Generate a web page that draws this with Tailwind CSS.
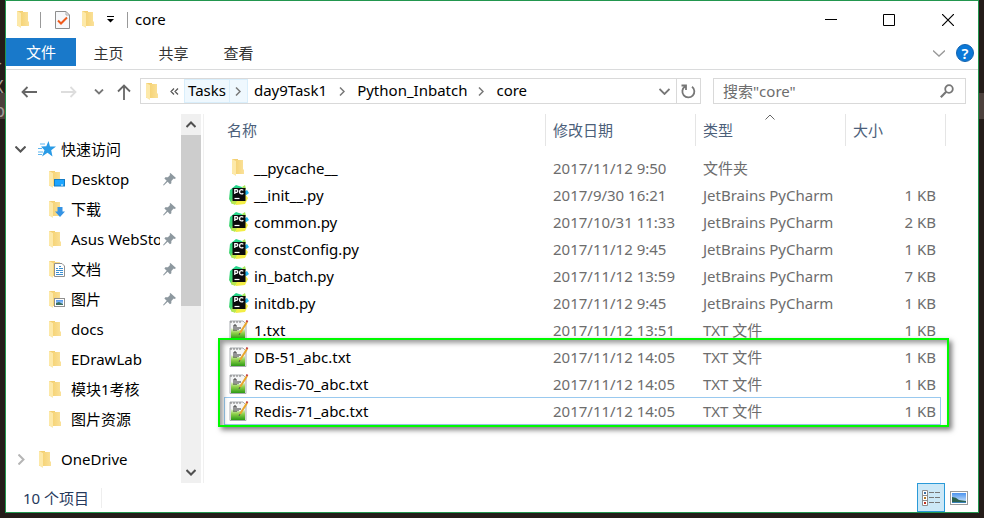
<!DOCTYPE html>
<html lang="zh-CN">
<head>
<meta charset="utf-8">
<title>core</title>
<script src="https://cdn.jsdelivr.net/npm/@tailwindcss/browser@4"></script>
</head>
<body class="min-h-screen bg-[#241c19] font-['Noto_Sans','Noto_Sans_CJK_SC',sans-serif] text-[15px] leading-5 text-black">

<svg class="absolute size-0" aria-hidden="true">
  <defs>
    <linearGradient id="fold" x1="0" x2="1"><stop offset="0" stop-color="#f6d478"/><stop offset="1" stop-color="#fae19a"/></linearGradient>
    <linearGradient id="grass" x1="0" x2="0" y1="0" y2="1"><stop offset="0" stop-color="#e9f6d6"/><stop offset="0.45" stop-color="#8fd04a"/><stop offset="1" stop-color="#2c9a16"/></linearGradient>
    <linearGradient id="jbl" x1="0" x2="0" y1="0" y2="1"><stop offset="0" stop-color="#1fd68d"/><stop offset="1" stop-color="#4fd463"/></linearGradient>
    <linearGradient id="sky" x1="0" x2="0" y1="0" y2="1"><stop offset="0" stop-color="#4c93ee"/><stop offset="1" stop-color="#d9ecfb"/></linearGradient>
    <symbol id="folder" viewBox="0 0 12 17">
      <path d="M0 0H6V15H0Z" fill="#f3cf72"/>
      <path d="M4 1H11V10L12 11V15H4Z" fill="url(#fold)"/>
      <path d="M0 0L4 2V17L0 14.500Z" fill="#fde9a9"/>
    </symbol>
    <symbol id="pycharm" viewBox="0 0 20 20">
      <path d="M1 5L7 0L13 2L11 14L3 19L0 14Z" fill="url(#jbl)"/>
      <path d="M13 2L16 0L17 4L14 6Z" fill="#a6e95a"/>
      <path d="M15 7L18 5L20 8L16 11Z" fill="#1fb5ea"/>
      <path d="M16 9L19 13L16 19L7 20L4 16Z" fill="#f3ee45"/>
      <path d="M3 14L8 16L6 20L2 18Z" fill="#b7e750"/>
      <rect x="3.500" y="3" width="13" height="13" fill="#0b0b0c"/>
      <path d="M5.800 9V4.700H7.400Q8.800 4.700 8.800 6T7.400 7.300H5.800M14.300 5.400Q13.600 4.700 12.600 4.700Q10.600 4.700 10.600 6.800T12.600 8.900Q13.600 8.900 14.300 8.200" fill="none" stroke="#fff" stroke-width="1.300"/>
      <path d="M5.500 13.500H10.500" stroke="#fff" stroke-width="1.200"/>
    </symbol>
    <symbol id="notepad" viewBox="0 0 20 20">
      <path d="M1 1H14L17 4V19.500H1Z" fill="#f4f5f6" stroke="#a9adb1"/>
      <path d="M2 3V1M5 3V1M8 3V1M11 3V1" stroke="#777"/>
      <path d="M2 8Q9 12 16 9V19H2Z" fill="url(#grass)"/>
      <path d="M5 5V11M7 5V11M5 5H7M9 7V10M11 7V9" fill="none" stroke="#333"/>
      <path d="M18 2L11 13" stroke="#e9a52c" stroke-width="2"/>
      <path d="M17.500 2L18.500 0.500" stroke="#c23d3d" stroke-width="2"/>
      <path d="M11 13L10 15" stroke="#555"/>
    </symbol>
    <symbol id="pin" viewBox="0 0 14 14">
      <path d="M8 0L14 5.500L12.500 6.500L11.500 6L9 8.500L9 11L7.500 12L5 9.300L0.800 13.500L0 13L4 8.300L1.500 6L2.500 4.500L5.300 4.600L7.800 2L7 1Z" fill="#8d989f"/>
    </symbol>
    <symbol id="crumb" viewBox="0 0 6 9"><path d="M1 0.500L5 4.500L1 8.500" fill="none" stroke="#777" stroke-width="1.500"/></symbol>
  </defs>
</svg>

<div class="relative flex min-h-screen px-[5px] pb-[5px]">
  <!-- editor peeking out behind the window -->
  <div class="absolute inset-x-0 top-[93px] h-[26px] bg-[#4c403c]"></div>
  <div class="absolute left-0 top-[50px] w-[5px] overflow-hidden text-[18px] leading-6 text-[#a39c98]" aria-hidden="true">
    <div class="-ml-1">-</div><div class="-ml-[7px]">X</div><div class="-ml-[6px]">p</div>
  </div>

  <div class="relative flex min-w-0 flex-1 flex-col border border-[#22964e] bg-white">
    <!-- title bar -->
    <header class="flex h-[37px] items-center pl-[11px]">
      <svg class="h-[17px] w-3"><use href="#folder"/></svg>
      <span class="ml-[11px] h-4 w-px bg-[#999]"></span>
      <button class="ml-[14px]" aria-label="属性">
        <svg class="h-[18px] w-[15px]" viewBox="0 0 15 18"><path d="M0.500 0.500H11L14.500 4V17.500H0.500Z" fill="#f7f8fa" stroke="#8d8d8d"/><path d="M11 0.500V4H14.500" fill="none" stroke="#aaa"/><path d="M3 9.500L6 12.500L12 6.500" fill="none" stroke="#ee5a1c" stroke-width="2"/></svg>
      </button>
      <button class="ml-3" aria-label="新建文件夹"><svg class="h-[17px] w-3"><use href="#folder"/></svg></button>
      <button class="ml-[13px]" aria-label="自定义快速访问工具栏"><svg class="h-[7px] w-[7px]" viewBox="0 0 7 7"><path d="M0 0.500H7" stroke="#000"/><path d="M0 3H7L3.500 6.500Z"/></svg></button>
      <span class="ml-[13px] h-4 w-px bg-[#999]"></span>
      <h1 class="ml-[7px] pb-[2px]">core</h1>
      <div class="ml-auto flex self-stretch">
        <button class="flex w-[58px] items-center justify-center" aria-label="最小化"><svg class="h-3 w-3" viewBox="0 0 12 12"><path d="M0 5.500H12" stroke="#000"/></svg></button>
        <button class="flex w-[58px] items-center justify-center" aria-label="最大化"><svg class="h-3 w-3" viewBox="0 0 12 12"><path d="M0.500 0.500H11.500V11.500H0.500Z" fill="none" stroke="#000"/></svg></button>
        <button class="flex w-[60px] items-center justify-center" aria-label="关闭"><svg class="h-3 w-3" viewBox="0 0 12 12"><path d="M0 0L12 12M12 0L0 12" stroke="#000" stroke-width="1.200"/></svg></button>
      </div>
    </header>

    <!-- ribbon tabs -->
    <nav class="flex h-8 items-start border-b border-[#dadbdc] text-[#333]">
      <button class="h-7 w-[70px] bg-[#1979ca] text-white">文件</button>
      <button class="h-[30px] w-[65px]">主页</button>
      <button class="h-[30px] w-[65px]">共享</button>
      <button class="h-[30px] w-[65px]">查看</button>
      <div class="ml-auto flex h-[30px] items-center gap-[11px] pr-1">
        <button aria-label="展开功能区"><svg class="h-[7px] w-3" viewBox="0 0 12 7"><path d="M0 0.500L6 6L12 0.500" fill="none" stroke="#999" stroke-width="1.300"/></svg></button>
        <button class="size-[18px] rounded-full border border-[#1263b0] bg-[#0b78d7] text-center text-[15px] font-semibold leading-4 text-white" aria-label="帮助">?</button>
      </div>
    </nav>

    <!-- address row -->
    <div class="flex h-11 items-start pt-2">
      <div class="flex h-[26px] w-[134px] shrink-0 items-center pl-[15px] pt-[2px]">
        <button aria-label="后退"><svg class="h-3 w-4" viewBox="0 0 16 12"><path d="M16 6H1.500M6.500 1L1.500 6L6.500 11" fill="none" stroke="#666" stroke-width="1.800"/></svg></button>
        <button class="ml-6" aria-label="前进"><svg class="h-3 w-4" viewBox="0 0 16 12"><path d="M0 6H14.500M9.500 1L14.500 6L9.500 11" fill="none" stroke="#ddd" stroke-width="1.800"/></svg></button>
        <button class="ml-[17px]" aria-label="最近位置"><svg class="h-[6px] w-[10px]" viewBox="0 0 10 6"><path d="M1 0.500L5 4.500L9 0.500" fill="none" stroke="#777" stroke-width="1.800"/></svg></button>
        <button class="ml-[13px]" aria-label="上移"><svg class="h-4 w-[14px]" viewBox="0 0 14 16"><path d="M7 16V1.500M1 7.500L7 1.500L13 7.500" fill="none" stroke="#666" stroke-width="1.800"/></svg></button>
      </div>
      <div class="flex h-[26px] min-w-0 flex-1 items-center border border-[#d9d9d9] pl-[5px]">
        <svg class="h-[17px] w-3"><use href="#folder"/></svg>
        <svg class="ml-3 h-[7px] w-[9px]" viewBox="0 0 9 7"><path d="M4 0.500L1 3.500L4 6.500M8 0.500L5 3.500L8 6.500" fill="none" stroke="#555" stroke-width="1.200"/></svg>
        <a href="#" class="ml-[5px] flex h-full items-center border border-[#d9eefb] bg-[#eff8fe] px-[3px] pb-[2px]">Tasks</a>
        <span class="flex h-full w-[18px] items-center justify-center border-y border-r border-[#d9eefb] bg-[#eff8fe]"><svg class="h-[9px] w-[6px]"><use href="#crumb"/></svg></span>
        <a href="#" class="ml-[6px] pb-[2px]">day9Task1</a>
        <svg class="mx-3 h-[9px] w-[6px]"><use href="#crumb"/></svg>
        <a href="#" class="pb-[2px]">Python_Inbatch</a>
        <svg class="ml-[11px] mr-3 h-[9px] w-[6px]"><use href="#crumb"/></svg>
        <a href="#" class="pb-[2px]">core</a>
        <button class="ml-auto mr-[6px]" aria-label="以前的位置"><svg class="h-[7px] w-[11px]" viewBox="0 0 11 7"><path d="M0.500 1L5.500 6L10.500 1" fill="none" stroke="#777" stroke-width="1.800"/></svg></button>
        <button class="flex h-full w-6 items-center justify-center border-l border-[#d9d9d9]" aria-label="刷新"><svg class="h-[15px] w-[15px]" viewBox="0 0 15 15"><path d="M4 2.500A6 6 0 1 0 11 2.700M0.500 1.500H5V6" fill="none" stroke="#777" stroke-width="1.800"/></svg></button>
      </div>
      <label class="ml-3 mr-3 flex h-[26px] w-[253px] shrink-0 items-center border border-[#d9d9d9] px-[9px] pr-[11px]">
        <input type="search" placeholder="搜索&quot;core&quot;" aria-label="搜索" class="min-w-0 flex-1 outline-none placeholder:text-[#6d6d6d]">
        <svg class="h-[14px] w-[14px]" viewBox="0 0 14 14"><circle cx="9" cy="5" r="3.800" fill="none" stroke="#777" stroke-width="1.800"/><path d="M6.200 7.800L0.800 13.200" stroke="#777" stroke-width="2.200"/></svg>
      </label>
    </div>

    <div class="flex min-h-0 flex-1">
      <!-- navigation pane -->
      <aside class="w-[175px] shrink-0 overflow-hidden pt-5">
        <ul>
          <li class="flex h-[30px] items-center pl-[9px]">
            <svg class="h-[7px] w-[11px]" viewBox="0 0 11 7"><path d="M0.500 0.500L5.500 5.500L10.500 0.500" fill="none" stroke="#555" stroke-width="2"/></svg>
            <svg class="ml-3 h-4 w-[18px]" viewBox="0 0 18 16"><path d="M10.500 0L12 5.500L18 5.500L13.200 9.300L14.500 15.500L9.500 11.800L4 15.500L6.500 9.300L3 5.500L8.300 5.300Z" fill="#2a9be6"/><path d="M2 3H7M0 7.500H4M0 11H5M0 13.500H4" stroke="#5cb5ee"/></svg>
            <span class="ml-[5px]">快速访问</span>
          </li>
          <li class="flex h-[30px] items-center pl-[43px] pr-[5px]">
            <svg class="h-[17px] w-4 shrink-0" viewBox="0 0 16 17"><use href="#folder" width="12" height="17"/><rect x="5.500" y="8.500" width="10" height="6.500" fill="#1da5ff" stroke="#147cc4"/><path d="M12 14H14" stroke="#fff"/></svg>
            <span class="ml-[6px] min-w-0 flex-1 overflow-hidden whitespace-nowrap">Desktop</span><svg class="ml-[3px] size-[13px] shrink-0"><use href="#pin"/></svg>
          </li>
          <li class="flex h-[30px] items-center pl-[43px] pr-[5px]">
            <svg class="h-[17px] w-4 shrink-0" viewBox="0 0 16 17"><use href="#folder" width="12" height="17"/><path d="M8.500 6H13.500V10.500H16L11 16L6 10.500H8.500Z" fill="#3593e4"/></svg>
            <span class="ml-[6px] min-w-0 flex-1 overflow-hidden whitespace-nowrap">下载</span><svg class="ml-[3px] size-[13px] shrink-0"><use href="#pin"/></svg>
          </li>
          <li class="flex h-[30px] items-center pl-[43px] pr-[5px]">
            <svg class="mr-1 h-[17px] w-3 shrink-0"><use href="#folder"/></svg>
            <span class="ml-[6px] min-w-0 flex-1 overflow-hidden whitespace-nowrap">Asus WebStorage</span><svg class="ml-[3px] size-[13px] shrink-0"><use href="#pin"/></svg>
          </li>
          <li class="flex h-[30px] items-center pl-[43px] pr-[5px]">
            <svg class="h-[17px] w-4 shrink-0" viewBox="0 0 16 17"><use href="#folder" width="12" height="17"/><path d="M5.500 2.500H13L15.500 5V15.500H5.500Z" fill="#fff" stroke="#909090"/><path d="M7 7.500H9M10 5.500H12M10 7.500H14M7 9.500H14M7 11.500H10M11 11.500H14M7 13.500H14" stroke="#3d8fd0"/></svg>
            <span class="ml-[6px] min-w-0 flex-1 overflow-hidden whitespace-nowrap">文档</span><svg class="ml-[3px] size-[13px] shrink-0"><use href="#pin"/></svg>
          </li>
          <li class="flex h-[30px] items-center pl-[43px] pr-[5px]">
            <svg class="h-[17px] w-4 shrink-0" viewBox="0 0 16 17"><use href="#folder" width="12" height="17"/><rect x="5.500" y="7.500" width="10" height="8" fill="#fff" stroke="#909090"/><rect x="7" y="9" width="7" height="5" fill="url(#sky)"/><path d="M7 14V12L10 11L14 13V14Z" fill="#3b6f62"/></svg>
            <span class="ml-[6px] min-w-0 flex-1 overflow-hidden whitespace-nowrap">图片</span><svg class="ml-[3px] size-[13px] shrink-0"><use href="#pin"/></svg>
          </li>
          <li class="flex h-[30px] items-center gap-[10px] pl-[43px]"><svg class="h-[17px] w-3"><use href="#folder"/></svg>docs</li>
          <li class="flex h-[30px] items-center gap-[10px] pl-[43px]"><svg class="h-[17px] w-3"><use href="#folder"/></svg>EDrawLab</li>
          <li class="flex h-[30px] items-center gap-[10px] pl-[43px]"><svg class="h-[17px] w-3"><use href="#folder"/></svg>模块1考核</li>
          <li class="flex h-[30px] items-center gap-[10px] pl-[43px]"><svg class="h-[17px] w-3"><use href="#folder"/></svg>图片资源</li>
          <li class="mt-[10px] flex h-[30px] items-center pl-3">
            <svg class="h-[11px] w-[7px]" viewBox="0 0 7 11"><path d="M0.500 0.500L5.500 5.500L0.500 10.500" fill="none" stroke="#b5b5b5" stroke-width="2"/></svg>
            <svg class="ml-[14px] mr-[10px] h-[17px] w-3"><use href="#folder"/></svg>OneDrive
          </li>
        </ul>
      </aside>
      <div class="flex w-5 shrink-0 flex-col bg-[#f0f0f0]">
        <button class="flex h-[21px] items-center justify-center" aria-label="向上滚动"><svg class="h-[7px] w-[10px]" viewBox="0 0 10 7"><path d="M0.500 6L5 1.500L9.500 6" fill="none" stroke="#505050" stroke-width="2"/></svg></button>
        <div class="h-[171px] bg-[#cdcdcd]"></div>
        <button class="mt-auto flex h-[21px] items-center justify-center" aria-label="向下滚动"><svg class="h-[7px] w-[10px]" viewBox="0 0 10 7"><path d="M0.500 1L5 5.500L9.500 1" fill="none" stroke="#505050" stroke-width="2"/></svg></button>
      </div>

      <!-- file list -->
      <main class="relative ml-[2px] min-w-0 flex-1 border-l border-[#f0f0f0] pl-5 pr-8">
        <table class="w-full table-fixed border-separate border-spacing-0 whitespace-nowrap text-left text-[#6d6d6d]">
          <colgroup><col><col class="w-[150px]"><col class="w-[150px]"><col class="w-[95px]"><col class="w-[5px]"></colgroup>
          <thead class="text-[#4c607a]">
            <tr class="h-8">
              <th class="border-r border-[#e5e5e5] pl-[3px] font-normal">名称</th>
              <th class="border-r border-[#e5e5e5] pl-[7px] font-normal">修改日期</th>
              <th class="relative border-r border-[#e5e5e5] pl-[7px] font-normal">类型<svg class="absolute left-1/2 top-0 h-[6px] w-[10px] -translate-x-1/2" viewBox="0 0 10 6"><path d="M0.500 5.500L5 1L9.500 5.500" fill="none" stroke="#666"/></svg></th>
              <th colspan="2" class="border-r border-[#e5e5e5] pl-[7px] font-normal">大小</th>
            </tr>
            <tr class="h-2"><td colspan="5"></td></tr>
          </thead>
          <tbody>
            <tr class="h-[27px]"><td class="text-black"><div class="flex items-center pl-2"><svg class="mr-[10px] h-[17px] w-3"><use href="#folder"/></svg>__pycache__</div></td><td class="pl-[7px]">2017/11/12 9:50</td><td class="pl-[7px]">文件夹</td><td></td><td></td></tr>
            <tr class="h-[27px]"><td class="text-black"><div class="flex items-center pl-[5px]"><svg class="mr-[5px] size-5"><use href="#pycharm"/></svg>__init__.py</div></td><td class="pl-[7px]">2017/9/30 16:21</td><td class="pl-[7px]">JetBrains PyCharm</td><td class="pr-[5px] text-right">1 KB</td><td></td></tr>
            <tr class="h-[27px]"><td class="text-black"><div class="flex items-center pl-[5px]"><svg class="mr-[5px] size-5"><use href="#pycharm"/></svg>common.py</div></td><td class="pl-[7px]">2017/10/31 11:33</td><td class="pl-[7px]">JetBrains PyCharm</td><td class="pr-[5px] text-right">2 KB</td><td></td></tr>
            <tr class="h-[27px]"><td class="text-black"><div class="flex items-center pl-[5px]"><svg class="mr-[5px] size-5"><use href="#pycharm"/></svg>constConfig.py</div></td><td class="pl-[7px]">2017/11/12 9:45</td><td class="pl-[7px]">JetBrains PyCharm</td><td class="pr-[5px] text-right">1 KB</td><td></td></tr>
            <tr class="h-[27px]"><td class="text-black"><div class="flex items-center pl-[5px]"><svg class="mr-[5px] size-5"><use href="#pycharm"/></svg>in_batch.py</div></td><td class="pl-[7px]">2017/11/12 13:59</td><td class="pl-[7px]">JetBrains PyCharm</td><td class="pr-[5px] text-right">7 KB</td><td></td></tr>
            <tr class="h-[27px]"><td class="text-black"><div class="flex items-center pl-[5px]"><svg class="mr-[5px] size-5"><use href="#pycharm"/></svg>initdb.py</div></td><td class="pl-[7px]">2017/11/12 9:45</td><td class="pl-[7px]">JetBrains PyCharm</td><td class="pr-[5px] text-right">1 KB</td><td></td></tr>
            <tr class="h-[27px]"><td class="text-black"><div class="flex items-center pl-[5px]"><svg class="mr-[5px] size-5"><use href="#notepad"/></svg>1.txt</div></td><td class="pl-[7px]">2017/11/12 13:51</td><td class="pl-[7px]">TXT 文件</td><td class="pr-[5px] text-right">1 KB</td><td></td></tr>
            <tr class="h-[27px]"><td class="text-black"><div class="flex items-center pl-[5px]"><svg class="mr-[5px] size-5"><use href="#notepad"/></svg>DB-51_abc.txt</div></td><td class="pl-[7px]">2017/11/12 14:05</td><td class="pl-[7px]">TXT 文件</td><td class="pr-[5px] text-right">1 KB</td><td></td></tr>
            <tr class="h-[27px]"><td class="text-black"><div class="flex items-center pl-[5px]"><svg class="mr-[5px] size-5"><use href="#notepad"/></svg>Redis-70_abc.txt</div></td><td class="pl-[7px]">2017/11/12 14:05</td><td class="pl-[7px]">TXT 文件</td><td class="pr-[5px] text-right">1 KB</td><td></td></tr>
            <tr class="h-7"><td class="border-y border-l border-[#99c9ef] text-black"><div class="flex items-center pl-1"><svg class="mr-[5px] size-5"><use href="#notepad"/></svg>Redis-71_abc.txt</div></td><td class="border-y border-[#99c9ef] pl-[7px]">2017/11/12 14:05</td><td class="border-y border-[#99c9ef] pl-[7px]">TXT 文件</td><td class="border-y border-r border-[#99c9ef] pr-1 text-right">1 KB</td><td></td></tr>
          </tbody>
        </table>
        <!-- highlight around the new files -->
        <div class="pointer-events-none absolute left-[14px] right-[29px] top-[224px] h-[89px] border-2 border-[#00fa00] shadow-[3px_3px_5px_rgba(0,0,0,0.5),inset_3px_3px_5px_rgba(0,0,0,0.4)]"></div>
      </main>
    </div>

    <!-- status bar -->
    <footer class="flex h-[29px] items-center pl-[17px] text-[#26395c]">
      <span class="border-r border-[#eee] pr-3">10 个项目</span>
      <div class="ml-auto flex items-center gap-[5px] pr-[10px]">
        <button class="flex h-[29px] w-7 items-center justify-center border border-[#2a9ad8] bg-[#cce8f7]" aria-label="详细信息">
          <svg class="h-4 w-[18px]" viewBox="0 0 18 16"><path d="M0.500 0.500H5.500V15.500H0.500ZM0.500 5.500H5.500M0.500 10.500H5.500" fill="#fff" stroke="#8d8d8d"/><path d="M2 3H4" stroke="#3a6ea5" stroke-width="2"/><path d="M2 8H4" stroke="#b07a28" stroke-width="2"/><path d="M2 13H4" stroke="#c03020" stroke-width="2"/><path d="M7 2.500H12M13 2.500H18M7 7.500H12M13 7.500H18M7 12.500H12M13 12.500H18" stroke="#777"/></svg>
        </button>
        <button aria-label="大图标">
          <svg class="h-[14px] w-[18px]" viewBox="0 0 18 14"><rect x="0.500" y="0.500" width="17" height="13" fill="#fff" stroke="#999"/><rect x="2" y="2" width="14" height="10" fill="url(#sky)"/><path d="M2 6Q6 6 9 9L16 10V12H2Z" fill="#2c6250"/><path d="M2 11H16V12H2Z" fill="#3c83b8"/></svg>
        </button>
      </div>
    </footer>
  </div>
</div>
</body>
</html>
